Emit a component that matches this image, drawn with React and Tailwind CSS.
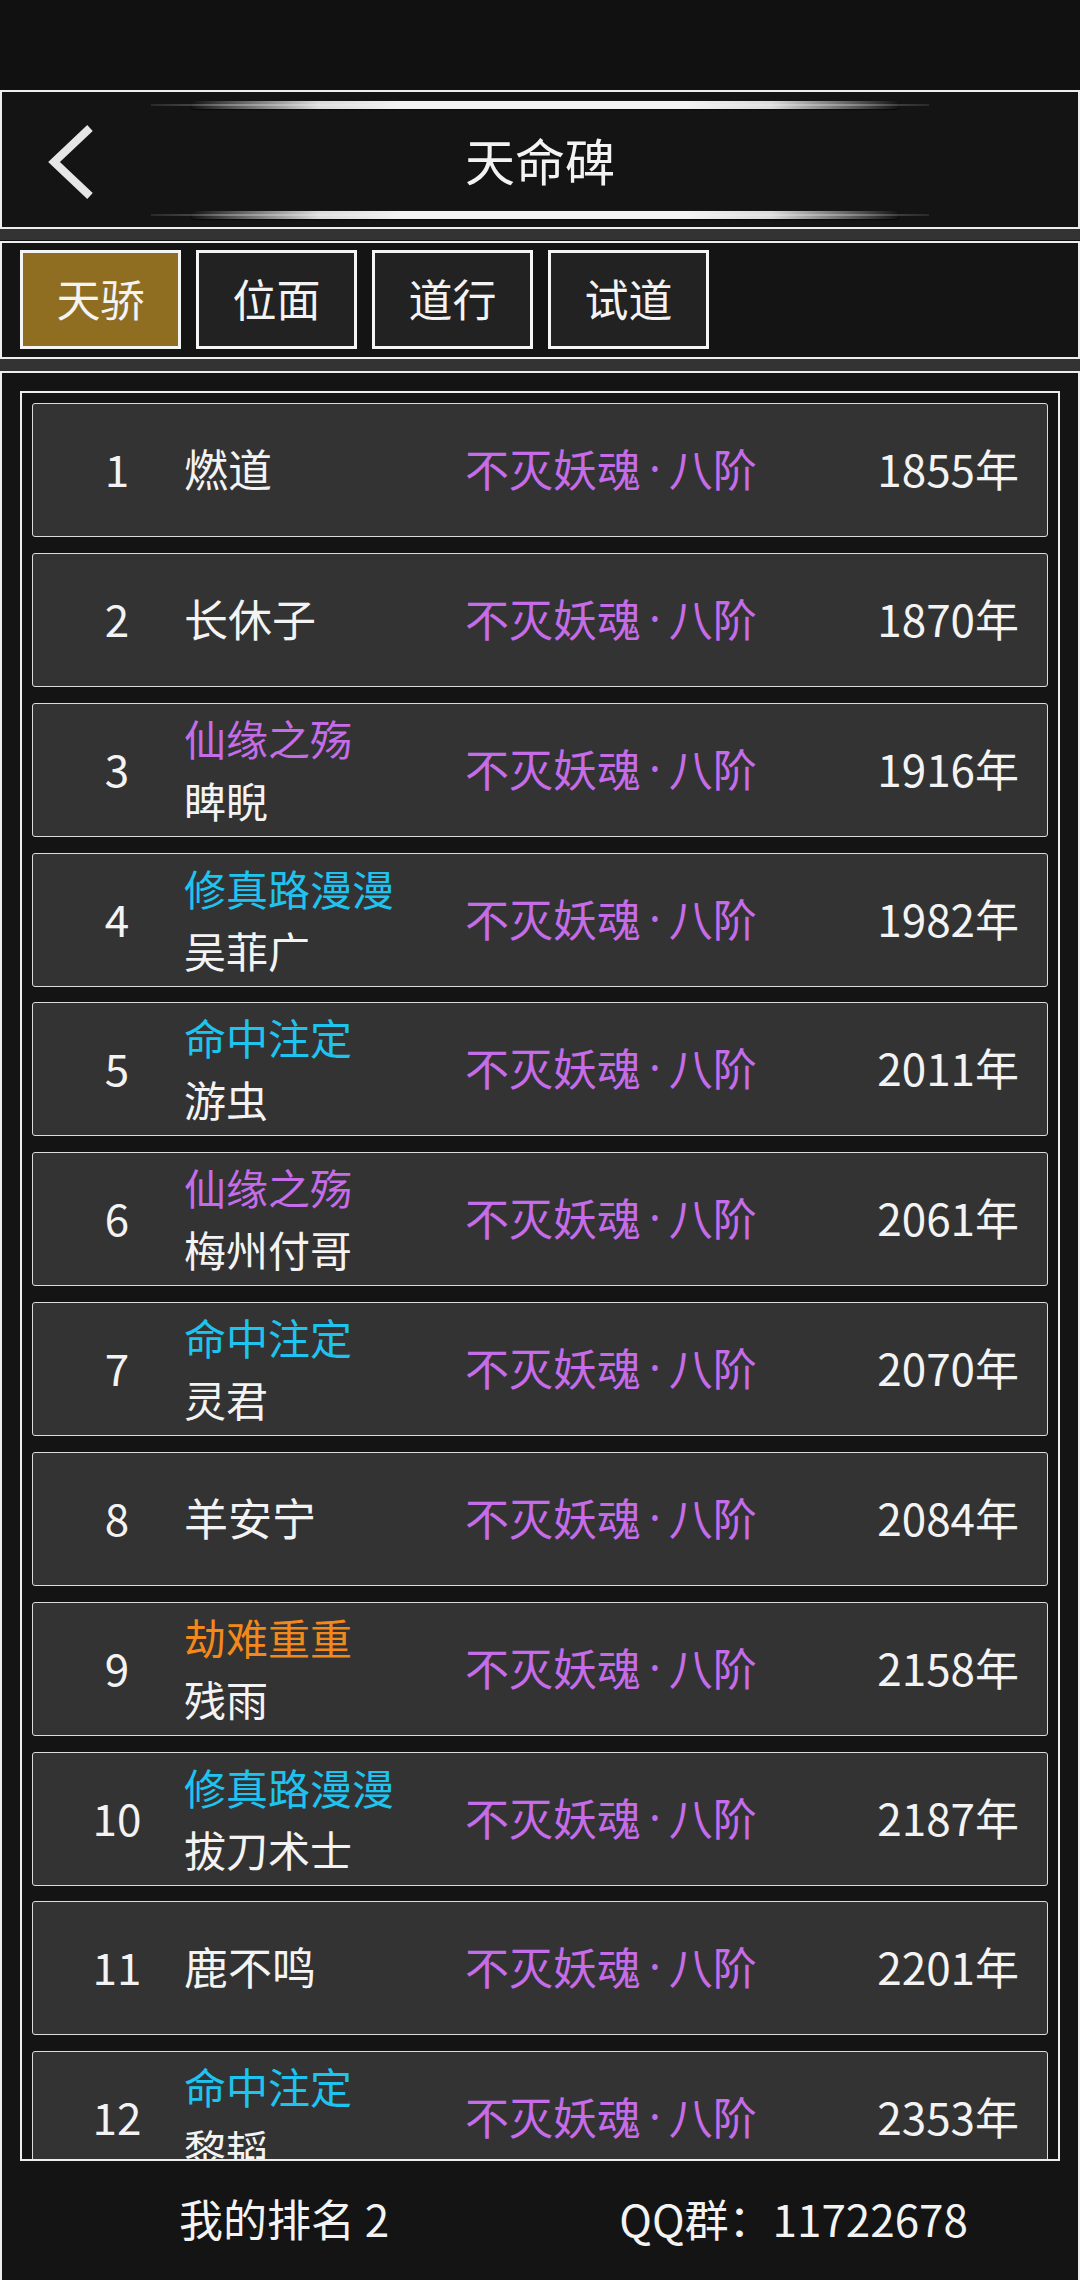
import React from "react";

const PURPLE = "text-[#c56ce8]";
const CYAN = "text-[#1ec4ef]";
const ORANGE = "text-[#f2891a]";

const rows = [
  { r: 1, name: "燃道", year: "1855" },
  { r: 2, name: "长休子", year: "1870" },
  { r: 3, title: "仙缘之殇", tc: PURPLE, name: "睥睨", year: "1916" },
  { r: 4, title: "修真路漫漫", tc: CYAN, name: "吴菲广", year: "1982" },
  { r: 5, title: "命中注定", tc: CYAN, name: "游虫", year: "2011" },
  { r: 6, title: "仙缘之殇", tc: PURPLE, name: "梅州付哥", year: "2061" },
  { r: 7, title: "命中注定", tc: CYAN, name: "灵君", year: "2070" },
  { r: 8, name: "羊安宁", year: "2084" },
  { r: 9, title: "劫难重重", tc: ORANGE, name: "残雨", year: "2158" },
  { r: 10, title: "修真路漫漫", tc: CYAN, name: "拔刀术士", year: "2187" },
  { r: 11, name: "鹿不鸣", year: "2201" },
  { r: 12, title: "命中注定", tc: CYAN, name: "黎韬", year: "2353" },
];

const tabs = ["天骄", "位面", "道行", "试道"];

function GlowLine() {
  return (
    <div className="relative h-[8px] w-[778px]">
      <div className="absolute left-0 right-0 top-[3px] h-[2px] bg-[linear-gradient(to_right,#2a2a2a,#5a5a5a_10%,#5a5a5a_90%,#2a2a2a)]" />
      <div className="absolute left-[40px] right-[30px] top-0 h-[8px] rounded-full bg-[linear-gradient(to_right,rgba(255,255,255,0),rgba(240,240,240,0.9)_18%,#f2f2f2_30%,#f2f2f2_70%,rgba(240,240,240,0.9)_82%,rgba(255,255,255,0))] shadow-[0_1px_1px_rgba(0,0,0,0.6)]" />
    </div>
  );
}

export default function App() {
  return (
    <div className="w-[1080px] h-[2280px] overflow-hidden bg-[#111111] text-[#f3f3f3] font-['Noto_Sans_CJK_SC','Noto_Sans',sans-serif] flex flex-col">
      {/* status bar */}
      <div className="h-[90px] shrink-0 bg-[#111111]" />

      {/* header */}
      <div className="relative h-[139px] shrink-0 border-2 border-[#eeeeee] bg-[#141414] flex flex-col items-center">
        <div className="mt-[9px]">
          <GlowLine />
        </div>
        <div className="flex-1 flex items-center justify-center text-[50px] leading-none pb-[2px]">
          天命碑
        </div>
        <div className="mb-[8px]">
          <GlowLine />
        </div>
        <svg
          className="absolute left-[40px] top-[28px]"
          width="64"
          height="84"
          viewBox="0 0 64 84"
        >
          <polyline
            points="48,8 12,42 48,76"
            fill="none"
            stroke="#e6e6e6"
            strokeWidth="8"
            strokeLinecap="butt"
            strokeLinejoin="miter"
          />
        </svg>
      </div>

      {/* strip */}
      <div className="h-[12px] shrink-0 bg-[#333333] border-b border-[#111]" />

      {/* tabs */}
      <div className="h-[118px] shrink-0 border-2 border-[#eeeeee] bg-[#141414] flex items-start gap-[15px] pl-[18px] pt-[7px]">
        {tabs.map((t, i) => (
          <div
            key={t}
            className={
              "w-[161px] h-[99px] border-[3px] border-[#f5f5f5] flex items-center justify-center text-[44px] leading-none pb-[3px] " +
              (i === 0 ? "bg-[#8f6e22]" : "bg-[#222222]")
            }
          >
            {t}
          </div>
        ))}
      </div>

      {/* strip */}
      <div className="h-[12px] shrink-0 bg-[#333333]" />

      {/* list area */}
      <div className="flex-1 border-x-2 border-t-2 border-[#eeeeee] bg-[#141414] flex flex-col">
        <div className="mt-[18px] ml-[18px] w-[1040px] h-[1770px] shrink-0 border-2 border-[#eeeeee] overflow-hidden">
          <div className="flex flex-col gap-[15.85px] pt-[10px] pl-[10px] pr-[10px]">
            {rows.map((row) => (
              <div
                key={row.r}
                className="h-[134px] shrink-0 rounded-[3px] border border-[#dcdcdc] bg-[#333333] flex items-center pb-[4px]"
              >
                <div className="ml-[24px] w-[120px] text-center text-[44px] leading-none">
                  {row.r}
                </div>
                <div className="ml-[7px] w-[281px]">
                  {row.title ? (
                    <div className="text-[42px] leading-[62px] pt-[2px]">
                      <div className={row.tc}>{row.title}</div>
                      <div className="whitespace-nowrap">{row.name}</div>
                    </div>
                  ) : (
                    <div className="text-[44px] leading-none">{row.name}</div>
                  )}
                </div>
                <div className={"flex items-center text-[44px] leading-none whitespace-nowrap " + PURPLE}>
                  <span>不灭妖魂</span>
                  <span className="mx-[8px] font-['Noto_Sans',sans-serif]">·</span>
                  <span>八阶</span>
                </div>
                <div className="flex-1 text-right pr-[28px] text-[44px] leading-none whitespace-nowrap">
                  {row.year}年
                </div>
              </div>
            ))}
          </div>
        </div>

        {/* footer */}
        <div className="flex-1 flex items-center pl-[177px] gap-[230px] text-[44px] leading-none pb-[6px]">
          <div>我的排名 2</div>
          <div>QQ群：11722678</div>
        </div>
      </div>
    </div>
  );
}
